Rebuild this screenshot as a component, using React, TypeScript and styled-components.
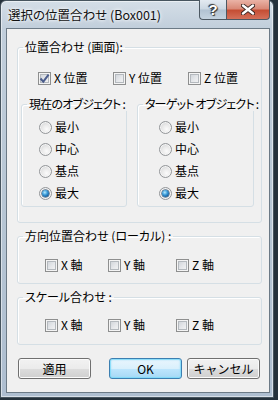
import React from 'react';
import styled, { createGlobalStyle, css } from 'styled-components';

const GlobalStyle = createGlobalStyle`
  html, body {
    margin: 0;
    padding: 0;
  }
  body {
    width: 278px;
    height: 400px;
    overflow: hidden;
    background: #25313b;
    font-family: "Noto Sans CJK JP", "Noto Sans", sans-serif;
    font-size: 12px;
    color: #000;
    font-feature-settings: "palt";
  }
`;

type Axis = { key: string; label: string; checked?: boolean };

const positionAxes: Axis[] = [
  { key: 'x', label: 'X 位置', checked: true },
  { key: 'y', label: 'Y 位置' },
  { key: 'z', label: 'Z 位置' },
];

const axisAxes: Axis[] = [
  { key: 'x', label: 'X 軸' },
  { key: 'y', label: 'Y 軸' },
  { key: 'z', label: 'Z 軸' },
];

const radioOptions = ['最小', '中心', '基点', '最大'];

function CheckBox({ checked }: { checked?: boolean }) {
  return (
    <SCheckBox>
      {checked && (
        <svg width="11" height="11" viewBox="0 0 11 11">
          <path d="M1.5 5.5 L4.3 8.6 L9.6 1.6" fill="none" stroke="#4b5d8c" strokeWidth="2" />
        </svg>
      )}
    </SCheckBox>
  );
}

function CheckRow({ items, cols, indent }: { items: Axis[]; cols: string; indent: number }) {
  return (
    <SCheckRow $cols={cols} $indent={indent}>
      {items.map((it) => (
        <SCheckItem key={it.key}>
          <CheckBox checked={it.checked} />
          <span>{it.label}</span>
        </SCheckItem>
      ))}
    </SCheckRow>
  );
}

function RadioGroup({ title, width, indent }: { title: string; width: number; indent: number }) {
  return (
    <SGroup $width={width}>
      <SLegend $tight>{title}</SLegend>
      <SGroupBody $pad={`5px 0 2px ${indent}px`}>
        {radioOptions.map((opt, i) => (
          <SRadioRow key={opt}>
            <SRadio $checked={i === radioOptions.length - 1} />
            <span>{opt}</span>
          </SRadioRow>
        ))}
      </SGroupBody>
    </SGroup>
  );
}

export default function App() {
  return (
    <>
      <GlobalStyle />
      <SWindow>
        <STitleBar>
          <STitle>選択の位置合わせ (Box001)</STitle>
          <SCaptionButton $variant="help">?</SCaptionButton>
          <SCaptionButton $variant="close">
            <svg width="14" height="11" viewBox="0 0 14 11">
              <path d="M2 1.5 L12 9.5 M12 1.5 L2 9.5" stroke="#3a2420" strokeWidth="4.2" strokeLinecap="round" />
              <path d="M2 1.5 L12 9.5 M12 1.5 L2 9.5" stroke="#fff" strokeWidth="2.4" strokeLinecap="round" />
            </svg>
          </SCaptionButton>
        </STitleBar>

        <SClient>
          <SGroup $top={11}>
            <SLegend>位置合わせ (画面):</SLegend>
            <SGroupBody $pad="17px 7px 15px 3px">
              <CheckRow items={positionAxes} cols="75px 75px auto" indent={17} />
              <SSubGroups>
                <RadioGroup title="現在のオブジェクト :" width={106} indent={17} />
                <RadioGroup title="ターゲット オブジェクト :" width={117} indent={21} />
              </SSubGroups>
            </SGroupBody>
          </SGroup>

          <SGroup $top={6}>
            <SLegend>方向位置合わせ (ローカル) :</SLegend>
            <SGroupBody $pad="15px 0 11px 0">
              <CheckRow items={axisAxes} cols="63px 68px auto" indent={27} />
            </SGroupBody>
          </SGroup>

          <SGroup $top={6}>
            <SLegend>スケール合わせ :</SLegend>
            <SGroupBody $pad="14px 0 12px 0">
              <CheckRow items={axisAxes} cols="63px 68px auto" indent={27} />
            </SGroupBody>
          </SGroup>

          <SButtonRow>
            <SButton>適用</SButton>
            <SButton $default>OK</SButton>
            <SButton>キャンセル</SButton>
          </SButtonRow>
        </SClient>
      </SWindow>
    </>
  );
}

const SWindow = styled.div`
  box-sizing: border-box;
  width: 274px;
  height: 398px;
  display: flex;
  flex-direction: column;
  border: 1px solid #47555f;
  border-radius: 6px 6px 0 0;
  background: linear-gradient(180deg, #d4dee7 0%, #c1cedb 7%, #b7c6d4 50%, #aebed0 100%);
  box-shadow: inset 0 0 0 1px rgba(255, 255, 255, 0.5);
`;

const STitleBar = styled.div`
  display: flex;
  align-items: flex-start;
  height: 27px;
  flex-shrink: 0;
`;

const STitle = styled.div`
  flex: 1;
  padding: 7px 0 0 7px;
  line-height: 14px;
  font-size: 12.5px;
  white-space: nowrap;
  color: #111;
  text-shadow: 0 0 5px #fff, 0 0 3px #fff;
`;

const SCaptionButton = styled.div<{ $variant: 'help' | 'close' }>`
  box-sizing: border-box;
  height: 20px;
  margin-top: -1px;
  display: flex;
  align-items: center;
  justify-content: center;
  border: 1px solid #4d5963;
  border-top: none;
  ${({ $variant }) =>
    $variant === 'help'
      ? css`
          width: 27px;
          border-right: none;
          border-radius: 0 0 0 4px;
          background: linear-gradient(180deg, #e3eaf1 0%, #cbd7e2 48%, #b1c2d2 52%, #c4d3df 100%);
          color: #fff;
          font-family: "Liberation Sans", Arial, sans-serif;
          font-weight: 700;
          font-size: 15px;
          text-shadow: 0 0 1px #222, 1px 1px 1px #333, -1px -1px 1px #333;
        `
      : css`
          width: 44px;
          margin-right: 3px;
          border-radius: 0 0 4px 0;
          background: linear-gradient(180deg, #eab3a6 0%, #d98a78 45%, #c54e34 55%, #d4705a 100%);
        `}
`;

const SClient = styled.div`
  flex: 1;
  display: flex;
  flex-direction: column;
  margin: 0 3px 4px 5px;
  padding: 0 7px 0 10px;
  border: 1px solid #6c7a86;
  background: #f0f0f0;
`;

const SGroup = styled.fieldset<{ $top?: number; $width?: number }>`
  box-sizing: border-box;
  margin: ${({ $top }) => $top ?? 0}px 0 0;
  padding: 0;
  min-width: 0;
  width: ${({ $width }) => ($width ? `${$width}px` : 'auto')};
  border: 1px solid #d5dfe5;
  border-radius: 3px;
  box-shadow: inset 1px 1px 0 #fff;
`;

const SLegend = styled.legend<{ $tight?: boolean }>`
  margin-left: 5px;
  padding: 0 2px;
  line-height: 14px;
  font-size: 12px;
  white-space: nowrap;
  letter-spacing: ${({ $tight }) => ($tight ? '-0.8px' : '0')};
`;

const SGroupBody = styled.div<{ $pad: string }>`
  display: flex;
  flex-direction: column;
  padding: ${({ $pad }) => $pad};
`;

const SCheckRow = styled.div<{ $cols: string; $indent: number }>`
  display: grid;
  grid-template-columns: ${({ $cols }) => $cols};
  padding-left: ${({ $indent }) => $indent}px;
  height: 14px;
  align-items: center;
`;

const SCheckItem = styled.label`
  display: flex;
  align-items: center;
  gap: 3px;
  line-height: 14px;
  white-space: nowrap;
`;

const SCheckBox = styled.span`
  box-sizing: border-box;
  width: 13px;
  height: 13px;
  flex-shrink: 0;
  display: flex;
  align-items: center;
  justify-content: center;
  border: 1px solid #8e8f8f;
  background: linear-gradient(135deg, #c9ced4 0%, #e6e8eb 55%, #f7f7f7 100%);
  box-shadow: inset 0 0 0 1px #f4f4f4, inset 0 0 0 2px #b4b9be;
`;

const SSubGroups = styled.div`
  display: flex;
  gap: 10px;
  margin-top: 12px;
`;

const SRadioRow = styled.label`
  display: flex;
  align-items: center;
  gap: 3px;
  height: 22px;
  line-height: 14px;
`;

const SRadio = styled.span<{ $checked?: boolean }>`
  box-sizing: border-box;
  width: 13px;
  height: 13px;
  flex-shrink: 0;
  border-radius: 50%;
  border: 1px solid #939699;
  display: flex;
  align-items: center;
  justify-content: center;
  background: radial-gradient(circle at 60% 65%, #fbfbfb 0%, #e9e9e9 45%, #c9cbce 100%);
  box-shadow: inset 0 0 0 1px #f5f5f5;
  ${({ $checked }) =>
    $checked &&
    css`
      &::after {
        content: '';
        width: 7px;
        height: 7px;
        border-radius: 50%;
        background: radial-gradient(circle at 40% 35%, #b7ecff 0%, #3a9ad8 40%, #0f5390 80%, #0a3f70 100%);
        box-shadow: 0 0 0 0.5px #1b3e60;
      }
    `}
`;

const SButtonRow = styled.div`
  display: flex;
  gap: 5px;
  margin-top: 13px;
  padding: 0 2px 0 1px;

  & > :first-child {
    margin-right: auto;
  }
`;

const SButton = styled.button<{ $default?: boolean }>`
  box-sizing: border-box;
  width: 73px;
  height: 21px;
  padding: 0;
  font-family: "Noto Sans CJK JP", "Noto Sans", sans-serif;
  font-size: 12px;
  line-height: 14px;
  color: #000;
  border-radius: 3px;
  border: 1px solid #707070;
  background: linear-gradient(180deg, #f2f2f2 0%, #ebebeb 50%, #dddddd 50%, #cfcfcf 100%);
  box-shadow: inset 0 0 0 1px #fbfbfb;
  ${({ $default }) =>
    $default &&
    css`
      border-color: #3c7fb1;
      background: linear-gradient(180deg, #eaf6fd 0%, #d9f0fc 50%, #bee6fd 50%, #a7d9f5 100%);
      box-shadow: inset 0 0 0 1px #48d7fb55, inset 0 0 2px 1px #9fdcf7;
    `}
`;
